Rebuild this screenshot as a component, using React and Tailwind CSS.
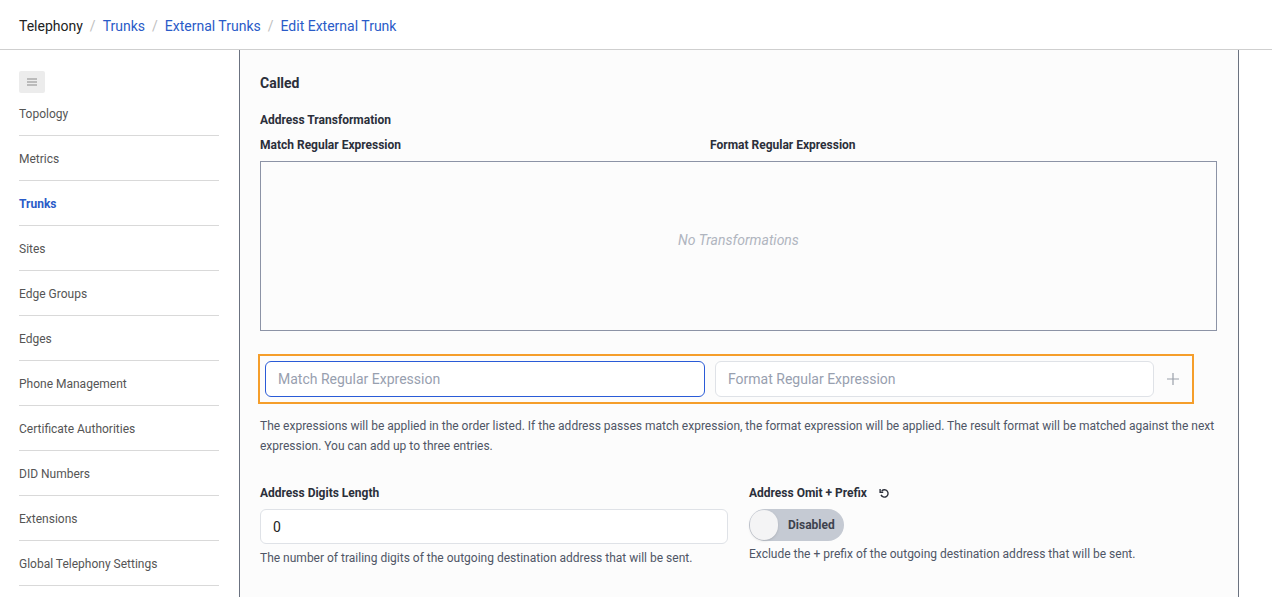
import React from 'react';

const navItems = [
  'Topology',
  'Metrics',
  'Trunks',
  'Sites',
  'Edge Groups',
  'Edges',
  'Phone Management',
  'Certificate Authorities',
  'DID Numbers',
  'Extensions',
  'Global Telephony Settings',
];

const Breadcrumbs = () => (
  <div className="h-[50px] border-b border-[#cfcfcf] flex items-center pl-[19px] pt-[3px] text-[14px] bg-white">
    <span className="text-[#222]">Telephony</span>
    <span className="text-[#c0c0c0] mx-[7px]">/</span>
    <span className="text-[#2a5bc8]">Trunks</span>
    <span className="text-[#c0c0c0] mx-[7px]">/</span>
    <span className="text-[#2a5bc8]">External Trunks</span>
    <span className="text-[#c0c0c0] mx-[7px]">/</span>
    <span className="text-[#2a5bc8]">Edit External Trunk</span>
  </div>
);

const Sidebar = () => (
  <aside className="w-[240px] shrink-0 border-r border-[#6b7280] pl-[19px] pt-[21px] bg-white">
    <button className="w-[26px] h-[22px] rounded-[2px] bg-[#ececec] flex items-center justify-center">
      <svg width="10" height="8" viewBox="0 0 10 8">
        <path d="M0 1h10M0 4h10M0 7h10" stroke="#8a8a8a" strokeWidth="1.2" />
      </svg>
    </button>
    <ul className="w-[200px] -mt-[2px]">
      {navItems.map((item) => (
        <li
          key={item}
          className={`h-[45px] flex items-center pt-[2px] border-b border-[#d9d9d9] text-[12px] ${
            item === 'Trunks' ? 'font-bold text-[#2a5bc8]' : 'text-[#555]'
          }`}
        >
          {item}
        </li>
      ))}
    </ul>
  </aside>
);

const Content = () => (
  <main className="w-[999px] shrink-0 border-r border-[#6b7280] bg-[#fcfcfc] pl-[20px] pr-[21px] pt-[23px] text-[#2b2f3a]">
    <h2 className="text-[14px] font-bold leading-[20px]">Called</h2>
    <div className="mt-[19px]">
      <div className="text-[12px] font-bold leading-[16px]">Address Transformation</div>
      <div className="flex text-[12px] font-bold leading-[16px] mt-[9px]">
        <span className="w-[450px]">Match Regular Expression</span>
        <span>Format Regular Expression</span>
      </div>
      <div className="mt-[8px] h-[170px] border border-[#8c93a6] flex items-center justify-center">
        <span className="italic text-[14px] text-[#b0b5bf] -mt-[12px]">No Transformations</span>
      </div>
      <div className="mt-[23px] -ml-[2px] w-[936px] border-2 border-[#f59e2b] p-[5px] flex items-center">
        <input
          className="w-[440px] h-[36px] rounded-[6px] border border-[#2a5bd7] bg-white px-[12px] text-[14px] placeholder-[#98a0af] outline-none"
          placeholder="Match Regular Expression"
        />
        <input
          className="ml-[10px] w-[439px] h-[36px] rounded-[6px] border border-[#dfe2e7] bg-white px-[12px] text-[14px] placeholder-[#98a0af] outline-none"
          placeholder="Format Regular Expression"
        />
        <svg className="ml-[13px]" width="12" height="12" viewBox="0 0 12 12">
          <path d="M6 0v12M0 6h12" stroke="#9aa0aa" strokeWidth="1.2" />
        </svg>
      </div>
      <p className="mt-[12px] text-[12px] leading-[20px] text-[#4f5666]">
        The expressions will be applied in the order listed. If the address passes match expression, the format expression will be applied. The result format will be matched against the next expression. You can add up to three entries.
      </p>
      <div className="grid grid-cols-2 gap-[21px] mt-[29px]">
        <div>
          <div className="text-[12px] font-bold leading-[16px]">Address Digits Length</div>
          <input
            className="mt-[8px] w-full h-[35px] rounded-[6px] border border-[#dfe2e7] bg-white px-[12px] text-[14px] text-[#222] outline-none"
            defaultValue="0"
          />
          <p className="mt-[4px] text-[12px] leading-[20px] text-[#4f5666]">
            The number of trailing digits of the outgoing destination address that will be sent.
          </p>
        </div>
        <div>
          <div className="flex items-center text-[12px] font-bold leading-[16px]">
            Address Omit + Prefix
            <svg className="ml-[12px]" width="11" height="11" viewBox="0 0 12 12" fill="none">
              <path d="M3 3.2A4 4 0 1 1 2.2 7.5" stroke="#2b2f3a" strokeWidth="1.5" />
              <path d="M1.2 1.2v3.4h3.4" stroke="#2b2f3a" strokeWidth="1.5" />
            </svg>
          </div>
          <div className="mt-[8px] w-[95px] h-[32px] rounded-full bg-[#c5cad3] flex items-center pl-[1px]">
            <div className="w-[28px] h-[30px] rounded-full bg-[#f4f4f5] shadow-sm" />
            <span className="ml-[10px] text-[12px] font-bold text-[#3d424d]">Disabled</span>
          </div>
          <p className="mt-[3px] text-[12px] leading-[20px] text-[#4f5666]">
            Exclude the + prefix of the outgoing destination address that will be sent.
          </p>
        </div>
      </div>
    </div>
  </main>
);

export default function App() {
  return (
    <div className="w-[1272px] h-[597px] overflow-hidden bg-white font-['Roboto',sans-serif]">
      <Breadcrumbs />
      <div className="flex h-[547px]">
        <Sidebar />
        <Content />
        <div className="flex-1 bg-white" />
      </div>
    </div>
  );
}
